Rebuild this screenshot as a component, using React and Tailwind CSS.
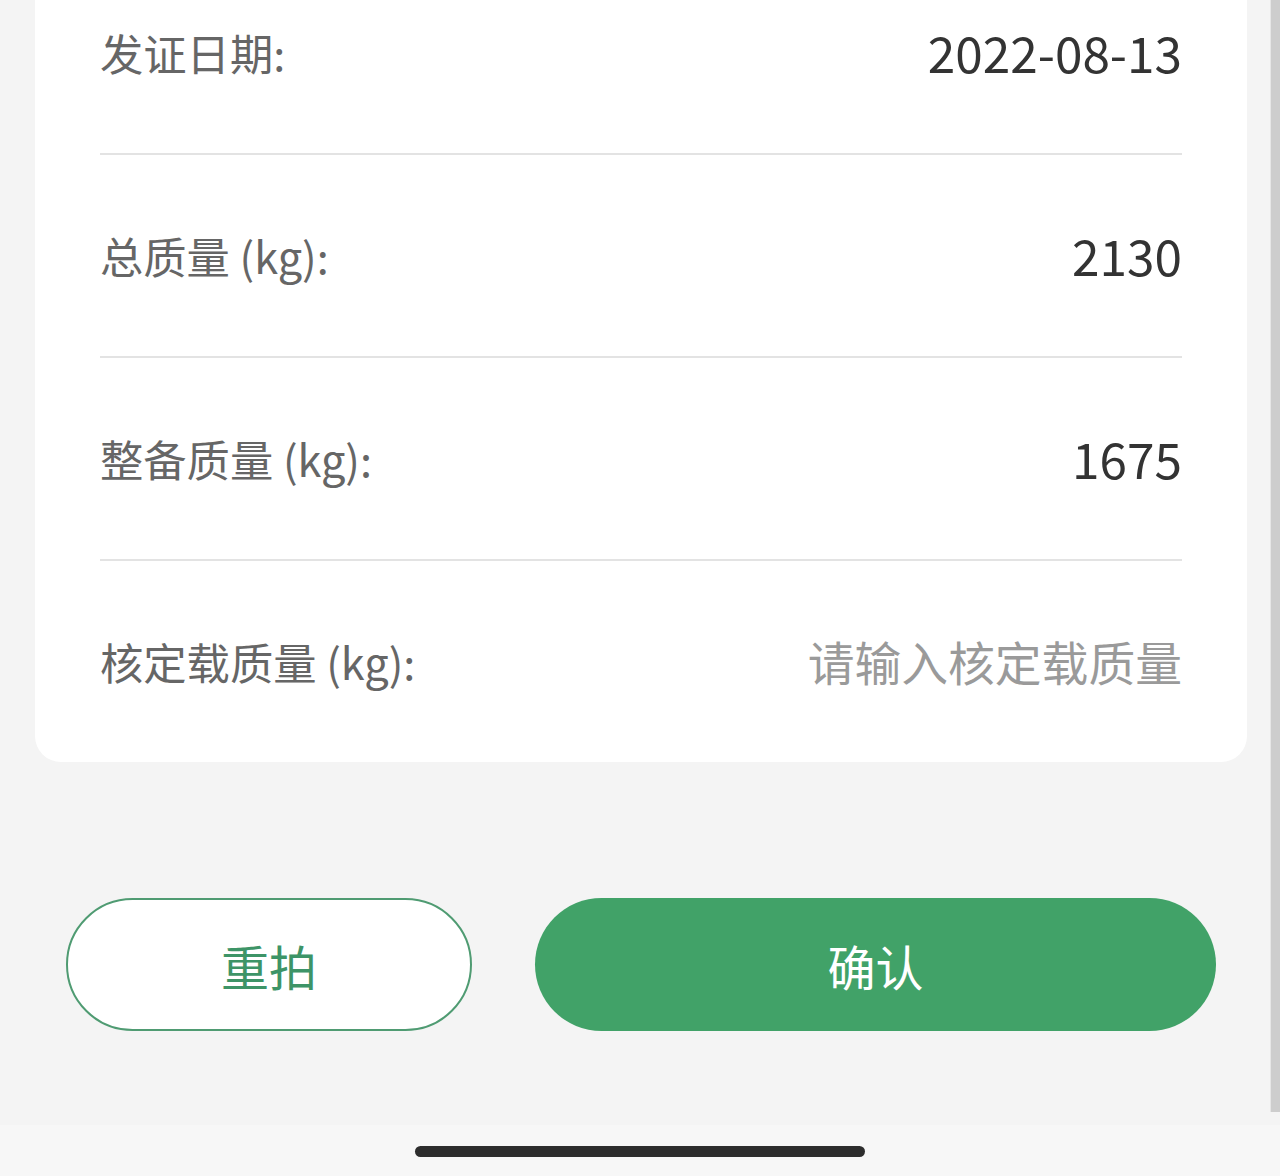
import React from "react";

const rows = [
  {label: "发证日期:", value: "2022-08-13"},
  {label: "总质量 (kg):", value: "2130"},
  {label: "整备质量 (kg):", value: "1675"},
  {label: "核定载质量 (kg):", placeholder: "请输入核定载质量"},
];

const font = {fontFamily: '"Noto Sans CJK SC", "Noto Sans", sans-serif'};

const App = () => {
  return (
    <div className="relative h-[1176px] w-[1280px] overflow-hidden bg-[#f4f4f4]" style={font}>
      {/* info card, top part scrolled out of view */}
      <div className="ml-[35px] mt-[-48px] w-[1212px] rounded-b-[26px] bg-white px-[65px]">
        {rows.map((row, i) => (
          <div
            key={row.label}
            className={
              "flex items-center justify-between " +
              (i < rows.length - 1 ? "h-[203px] border-b-2 border-[#e3e3e3]" : "h-[201px]")
            }
          >
            <span className="text-[43.3px] text-[#666666]">{row.label}</span>
            {row.value ? (
              <span className="text-[49.5px] text-[#333333]">{row.value}</span>
            ) : (
              <span className="text-[46.8px] text-[#9a9a9a]">{row.placeholder}</span>
            )}
          </div>
        ))}
      </div>

      {/* actions */}
      <div className="mt-[136px] flex gap-[63px] pl-[66px]">
        <button className="flex h-[133px] w-[406px] items-center justify-center rounded-full border-2 border-[#4f9b72] bg-white text-[48px] text-[#3d9467]">
          重拍
        </button>
        <button className="flex h-[133px] w-[681px] items-center justify-center rounded-full bg-[#41a268] text-[48px] text-white">
          确认
        </button>
      </div>

      {/* home indicator strip */}
      <div className="absolute bottom-0 left-0 flex h-[51px] w-full items-start justify-center bg-[#f7f7f7] pt-[21px]">
        <div className="h-[11px] w-[450px] rounded-full bg-[#2d2d2d]" />
      </div>

      {/* scrollbar */}
      <div className="absolute right-0 top-0 h-[1112px] w-[10px] border-l border-[#e6e6e6] bg-[#cdcdcd]" />
    </div>
  );
};

export default App;
